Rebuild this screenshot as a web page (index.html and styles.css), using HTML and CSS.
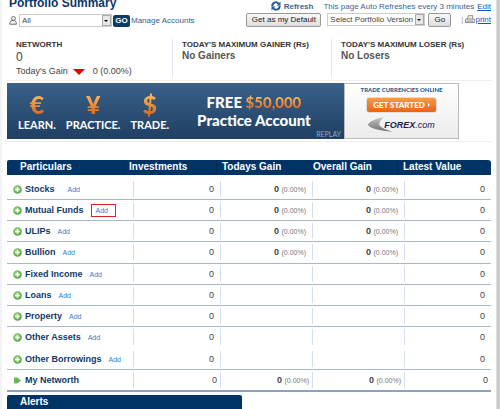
FILE: index.html
```html
<!DOCTYPE html>
<html lang="en">
<head>
    <meta charset="UTF-8">
    <meta name="viewport" content="width=device-width, initial-scale=1.0">
    <title>Portfolio Summary</title>
    <link rel="stylesheet" href="styles.css">
</head>
<body>
    <svg width="0" height="0" class="defs" aria-hidden="true">
        <defs>
            <radialGradient id="green" cx="40%" cy="35%" r="70%">
                <stop offset="0" stop-color="#9fd47c"/>
                <stop offset="1" stop-color="#52a043"/>
            </radialGradient>
            <linearGradient id="silver" x1="0" y1="0" x2="0" y2="1">
                <stop offset="0" stop-color="#c8c8c8"/>
                <stop offset="1" stop-color="#6f6f6f"/>
            </linearGradient>
        </defs>
        <symbol id="plus" viewBox="0 0 9 9">
            <circle cx="4.5" cy="4.5" r="4.3" fill="url(#green)"/>
            <path d="M4.5 2.2v4.6M2.2 4.5h4.6" stroke="#fff" stroke-width="1.5"/>
        </symbol>
    </svg>

    <main class="page">
        <header class="top">
            <div class="left">
                <h1>Portfolio Summary</h1>
                <form class="controls">
                    <svg class="user" viewBox="0 0 8 9" width="8" height="9" fill="#fff" stroke="#666"><circle cx="4.5" cy="2.5" r="1.9"/><path d="M.8 8.2c0-2.8 1.6-3.8 3.4-3.8s3.2 1 3.2 3.8z"/></svg>
                    <span class="select account">
                        <select aria-label="Account"><option>All</option></select>
                    </span>
                    <button type="button" class="go-dark">GO</button>
                    <a href="#" class="manage">Manage Accounts</a>
                </form>
            </div>
            <div class="right">
                <div class="refresh-line">
                    <svg viewBox="0 0 10 10" width="10" height="10" fill="none" stroke="#245a94" stroke-width="2"><path d="M1.3 5.2A3.6 3.6 0 0 1 7.6 2.6M8.7 4.8A3.6 3.6 0 0 1 2.4 7.4"/><path d="M9.5.6v3.8H5.7zM.5 9.4V5.6h3.8z" fill="#245a94" stroke="none"/></svg>
                    <a href="#" class="refresh">Refresh</a>
                    <span class="note">This page Auto Refreshes every 3 minutes</span>
                    <a href="#" class="link">Edit</a>
                </div>
                <form class="controls">
                    <button type="button" class="default-btn">Get as my Default</button>
                    <span class="select version">
                        <select aria-label="Portfolio version"><option>Select Portfolio Version</option></select>
                    </span>
                    <button type="button" class="go-btn">Go</button>
                    <span class="bar">|</span>
                    <a href="#" class="link print"><svg viewBox="0 0 10 9" width="10" height="9" fill="#eee" stroke="#777" stroke-width=".8"><path d="M2.5 4L3.3.6h4.5L7.6 4"/><path d="M.6 4h8.8v3.6H.6zM2 7.6l.5-1.5h5l.5 1.5"/></svg>print</a>
                </form>
            </div>
        </header>

        <section class="stats">
            <div class="stat">
                <h2>NETWORTH</h2>
                <p class="networth">0</p>
                <p class="gain">Today's Gain <i class="down"></i> <span>0 (0.00%)</span></p>
            </div>
            <div class="stat">
                <h2>TODAY'S MAXIMUM GAINER (Rs)</h2>
                <p class="none">No Gainers</p>
            </div>
            <div class="stat">
                <h2>TODAY'S MAXIMUM LOSER (Rs)</h2>
                <p class="none">No Losers</p>
            </div>
        </section>

        <section class="ad-wrap">
            <div class="ad">
                <div class="ad-main">
                    <div class="word"><b>€</b><span>LEARN.</span></div>
                    <div class="word"><b>¥</b><span>PRACTICE.</span></div>
                    <div class="word"><b>$</b><span>TRADE.</span></div>
                    <div class="offer">
                        <div>FREE <em>$50,000</em></div>
                        <div>Practice Account</div>
                    </div>
                    <a href="#" class="replay">REPLAY</a>
                </div>
                <div class="ad-side">
                    <div class="tagline">TRADE CURRENCIES ONLINE</div>
                    <button type="button" class="start">GET STARTED <i></i></button>
                    <div class="forex">
                        <svg viewBox="0 0 26 15" width="26" height="15" fill="url(#silver)"><path d="M16 0C8 1.500 1 4.500 0 7.500c1 4 12 6 25 7.300C17 12.500 11.500 10 11.300 7.500 11.200 5 13 2 16 0z"/></svg>
                        <span><b>FOREX</b>.com</span>
                    </div>
                </div>
            </div>
        </section>

        <table class="holdings">
            <thead>
                <tr><th>Particulars</th><th>Investments</th><th>Todays Gain</th><th>Overall Gain</th><th>Latest Value</th></tr>
            </thead>
            <tbody>
                <tr>
                    <td><svg class="ico"><use href="#plus"/></svg><b>Stocks</b><a href="#" class="add wide">Add</a></td>
                    <td>0</td><td><b>0</b> <small>(0.00%)</small></td><td><b>0</b> <small>(0.00%)</small></td><td>0</td>
                </tr>
                <tr>
                    <td><svg class="ico"><use href="#plus"/></svg><b>Mutual Funds</b><a href="#" class="add marked">Add</a></td>
                    <td>0</td><td><b>0</b> <small>(0.00%)</small></td><td><b>0</b> <small>(0.00%)</small></td><td>0</td>
                </tr>
                <tr>
                    <td><svg class="ico"><use href="#plus"/></svg><b>ULIPs</b><a href="#" class="add">Add</a></td>
                    <td>0</td><td><b>0</b> <small>(0.00%)</small></td><td><b>0</b> <small>(0.00%)</small></td><td>0</td>
                </tr>
                <tr>
                    <td><svg class="ico"><use href="#plus"/></svg><b>Bullion</b><a href="#" class="add">Add</a></td>
                    <td>0</td><td><b>0</b> <small>(0.00%)</small></td><td><b>0</b> <small>(0.00%)</small></td><td>0</td>
                </tr>
                <tr>
                    <td><svg class="ico"><use href="#plus"/></svg><b>Fixed Income</b><a href="#" class="add">Add</a></td>
                    <td>0</td><td></td><td></td><td>0</td>
                </tr>
                <tr>
                    <td><svg class="ico"><use href="#plus"/></svg><b>Loans</b><a href="#" class="add">Add</a></td>
                    <td>0</td><td></td><td></td><td>0</td>
                </tr>
                <tr>
                    <td><svg class="ico"><use href="#plus"/></svg><b>Property</b><a href="#" class="add">Add</a></td>
                    <td>0</td><td></td><td></td><td>0</td>
                </tr>
                <tr class="no-line">
                    <td><svg class="ico"><use href="#plus"/></svg><b>Other Assets</b><a href="#" class="add">Add</a></td>
                    <td>0</td><td></td><td></td><td>0</td>
                </tr>
                <tr>
                    <td><svg class="ico"><use href="#plus"/></svg><b>Other Borrowings</b><a href="#" class="add">Add</a></td>
                    <td>0</td><td></td><td></td><td>0</td>
                </tr>
            </tbody>
            <tfoot>
                <tr>
                    <td><svg class="ico" viewBox="0 0 9 9"><path d="M1 1.500h3.500L8 4.500 4.500 7.500H1z" fill="#6cb558"/></svg><b>My Networth</b></td>
                    <td>0</td><td><b>0</b> <small>(0.00%)</small></td><td><b>0</b> <small>(0.00%)</small></td><td>0</td>
                </tr>
            </tfoot>
        </table>

        <h2 class="alerts">Alerts</h2>
    </main>
</body>
</html>
```
FILE: styles.css
```css
html {
    overflow: hidden;
}

body {
    margin: 0;
    height: 100vh;
    overflow: hidden;
    box-sizing: border-box;
    border-left: 2px solid #f3f3f3;
    border-right: 3px solid #cbcbcb;
    font-family: "Liberation Sans", Arial, sans-serif;
    font-size: 9px;
    color: #444;
    background: #fff;
}

h1, h2, p, form {
    margin: 0;
}

button, select {
    font-family: inherit;
    padding: 0;
}

.defs {
    position: absolute;
}

.page {
    border-right: 1px solid #ddd;
    padding: 0 5px;
}

/* title and controls */
.top {
    display: flex;
    justify-content: space-between;
    height: 31px;
}

.top h1 {
    margin: -6px 0 0 2px;
    height: 19px;
    font-size: 12px;
    line-height: 18px;
    color: #0b3767;
    white-space: nowrap;
}

.controls {
    display: flex;
    align-items: center;
    height: 15px;
    white-space: nowrap;
}

.user {
    margin: 0 2px;
}

.select {
    position: relative;
    display: flex;
}

.select::before {
    content: "";
    position: absolute;
    right: 1px;
    top: 1px;
    bottom: 1px;
    width: 9px;
    border: 1px solid #aaa;
    box-sizing: border-box;
    background: #e6e6e6;
    pointer-events: none;
}

.select::after {
    content: "";
    position: absolute;
    right: 4px;
    top: 6px;
    border: 2px solid transparent;
    border-top-color: #000;
    border-bottom: 0;
    pointer-events: none;
}

select {
    appearance: none;
    width: 100%;
    height: 13px;
    padding-left: 2px;
    border: 1px solid #ccc;
    border-radius: 0;
    background: #fff;
    font-size: 8px;
    color: #444;
}

.account {
    width: 93px;
}

.version {
    width: 98px;
    margin: 0 3px 0 6px;
}

.go-dark {
    width: 17px;
    height: 12px;
    margin: 0 1px;
    border: 0;
    border-radius: 2px;
    background: #0d3b68;
    color: #fff;
    font-size: 8px;
    font-weight: bold;
}

.manage {
    font-size: 8px;
    color: #2f5f8f;
    text-decoration: none;
}

.refresh-line {
    display: flex;
    align-items: center;
    justify-content: flex-end;
    height: 12px;
    font-size: 8px;
    color: #3b6593;
    white-space: nowrap;
}

.refresh {
    margin: 0 10px 0 3px;
    font-weight: bold;
    color: #3b6593;
    text-decoration: none;
}

.note {
    margin-right: 3px;
}

.link {
    font-size: 8px;
    color: #1155cc;
}

.right .controls {
    justify-content: flex-end;
}

.default-btn,
.go-btn {
    height: 14px;
    border: 1px solid #999;
    border-radius: 2px;
    background: linear-gradient(#f8f8f8, #ddd);
    font-size: 8px;
    color: #222;
}

.default-btn {
    width: 75px;
}

.go-btn {
    width: 23px;
}

.bar {
    margin: 0 2px 0 10px;
    color: #999;
    font-size: 8px;
}

.print {
    display: flex;
    align-items: center;
}

/* summary figures */
.stats {
    display: grid;
    grid-template-columns: 166fr 159fr 159fr;
    padding: 8px 0 3px;
    border-bottom: 1px solid #eee;
}

.stat {
    height: 38px;
    padding-left: 9px;
    border-right: 1px solid #e4e4ee;
    white-space: nowrap;
}

.stat:last-child {
    border-right: 0;
}

.stat h2 {
    font-size: 8px;
    line-height: 12px;
    color: #333;
}

.networth {
    font-size: 12px;
    line-height: 13px;
}

.none {
    font-size: 10px;
    line-height: 10px;
    font-weight: bold;
    color: #555;
}

.gain {
    display: flex;
    align-items: center;
    line-height: 15px;
}

.down {
    margin: 0 8px 0 5px;
    border: 6px solid transparent;
    border-top-color: #e00000;
    border-bottom: 0;
}

/* advert */
.ad-wrap {
    padding: 2px 0;
    border-bottom: 1px solid #eee;
    margin-bottom: 18px;
}

.ad {
    display: flex;
    max-width: 452px;
    height: 56px;
    font-family: Lato, sans-serif;
}

.ad-main {
    position: relative;
    flex: 1;
    display: flex;
    align-items: center;
    gap: 10px;
    padding-left: 11px;
    background: linear-gradient(#3a6189, #1f3f63);
    color: #fff;
    white-space: nowrap;
}

.word {
    display: flex;
    flex-direction: column;
    align-items: center;
    font-size: 11px;
    line-height: 14px;
    font-weight: bold;
}

.word b {
    font-size: 25px;
    line-height: 28px;
    font-weight: 900;
}

.word b,
.offer em {
    font-style: normal;
    background: linear-gradient(#f9b75a 20%, #e06a1c 85%);
    background-clip: text;
    color: transparent;
}

.offer {
    margin-left: 18px;
    text-align: center;
    font-size: 15px;
    line-height: 18px;
    font-weight: 900;
}

.replay {
    position: absolute;
    right: 3px;
    bottom: 1px;
    font-size: 7px;
    line-height: 8px;
    color: #8fa8c2;
    text-decoration: none;
}

.ad-side {
    display: flex;
    flex-direction: column;
    align-items: center;
    width: 115px;
    box-sizing: border-box;
    border: 1px solid #bbb;
    background: linear-gradient(#fff, #ececec);
}

.tagline {
    margin-top: 1px;
    font-size: 6px;
    line-height: 9px;
    font-weight: 900;
    color: #2d5c8c;
}

.start {
    display: flex;
    align-items: center;
    justify-content: center;
    gap: 3px;
    width: 71px;
    height: 16px;
    margin: 3px 0 4px;
    border: 1px solid #ddd;
    border-radius: 3px;
    background: linear-gradient(#fb9a45, #ea6412);
    color: #fff;
    font-family: Lato, sans-serif;
    font-size: 8px;
    font-weight: 900;
}

.start i {
    border: 2px solid transparent;
    border-left-color: #fff;
    border-right: 0;
}

.forex {
    display: flex;
    align-items: center;
    font-family: "Liberation Sans", Arial, sans-serif;
    font-size: 9px;
    font-style: italic;
    color: #1c2350;
}

.forex span {
    margin-left: -10px;
}

/* holdings */
.holdings {
    display: block;
    white-space: nowrap;
}

thead, tbody, tfoot {
    display: block;
}

.holdings tr {
    display: grid;
    grid-template-columns: minmax(0, 127fr) 87fr 92fr 92fr 86fr;
}

.holdings thead tr {
    grid-template-columns: 117fr 93fr 91fr 90fr 93fr;
    height: 15px;
    margin-bottom: 4px;
    border-radius: 2px 3px 0 0;
    background: #003366;
}

.holdings th {
    padding: 0 0 0 5px;
    border-right: 1px solid #0a2850;
    text-align: left;
    font-size: 10px;
    line-height: 14px;
    color: #fff;
}

.holdings th:first-child {
    padding-left: 13px;
}

.holdings th:last-child {
    border-right: 0;
}

.holdings tbody tr,
.holdings tfoot tr {
    height: 20px;
    border-bottom: 1px solid #a9b9cc;
}

.holdings tbody tr:nth-child(4n) {
    height: 21px;
}

.holdings tbody .no-line {
    border-bottom-color: transparent;
}

.holdings tfoot tr {
    border-bottom: 2px solid #8ba3bf;
}

.holdings td {
    height: 16px;
    margin-top: 2px;
    padding: 0 6px 0 0;
    border-right: 1px solid #d3def0;
    text-align: right;
    line-height: 17px;
}

.holdings td:first-child {
    display: flex;
    align-items: center;
    padding-left: 6px;
    text-align: left;
    color: #0f3a68;
}

.holdings td:last-child {
    border-right: 0;
}

.holdings tfoot td {
    padding-right: 3px;
}

.ico {
    width: 9px;
    height: 9px;
    margin-right: 3px;
}

small {
    font-size: 7px;
    color: #777;
}

.add {
    margin-left: 7px;
    font-size: 7px;
    line-height: 11px;
    color: #2f7fd0;
    text-decoration: none;
}

.wide {
    margin-left: 13px;
}

.marked {
    padding: 0 7px 0 4px;
    border: 1px solid #e02030;
}

.alerts {
    width: 222px;
    height: 20px;
    margin-top: 3px;
    padding-left: 13px;
    border-radius: 2px 2px 0 0;
    background: #003366;
    color: #fff;
    font-size: 10px;
    line-height: 14px;
}
```
